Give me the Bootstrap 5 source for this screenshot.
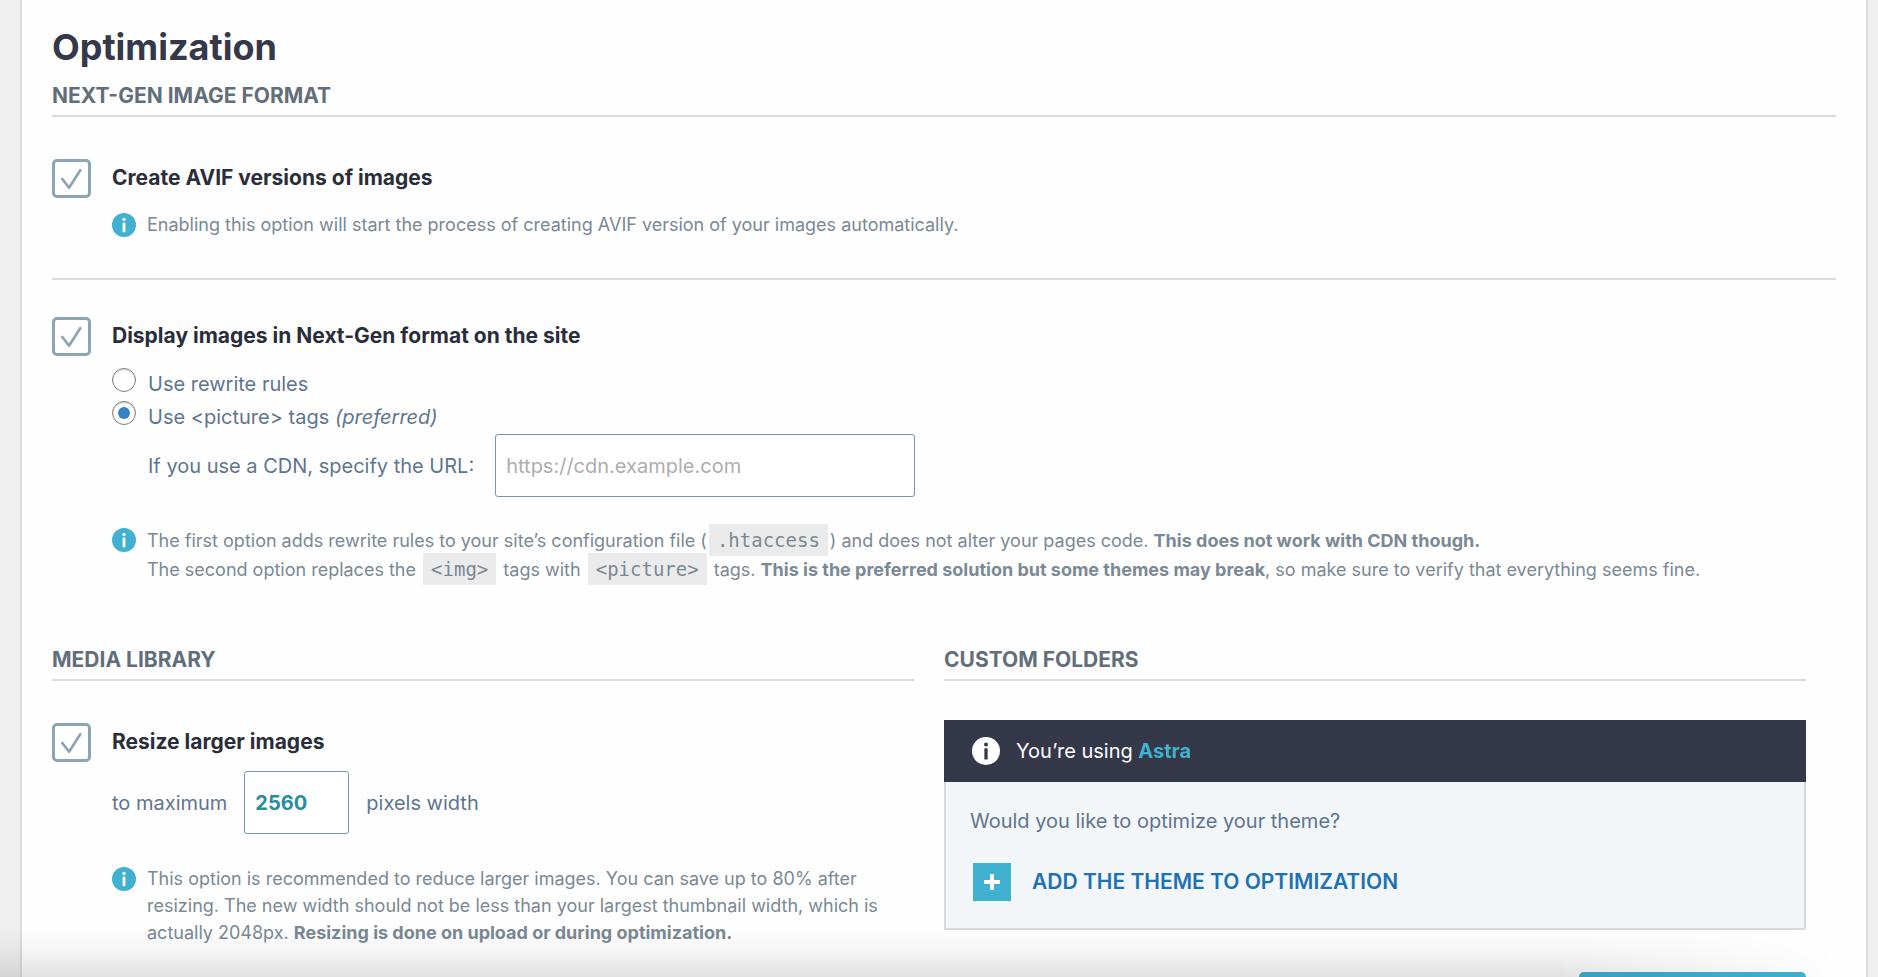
<!DOCTYPE html>
<html lang="en">
<head>
<meta charset="utf-8">
<meta name="viewport" content="width=device-width, initial-scale=1">
<title>Optimization settings</title>
<link rel="stylesheet" href="https://cdn.jsdelivr.net/npm/bootstrap@5.3.0/dist/css/bootstrap.min.css">
<style>
  body { background: #efefef; color: #5f758e; font-family: Inter, "Liberation Sans", sans-serif; font-size: 20px; line-height: 32px; }
  .page-scroll { scrollbar-width: none; padding: 0 10px 0 20px; }
  .page-scroll::-webkit-scrollbar { display: none; }
  .panel { background: #fefefe; border: solid #dcdcde; border-width: 0 2px; padding: 24px 30px 60px; }
  .panel-title { color: #343848; font-size: 36px; line-height: 46px; font-weight: 700; margin: 0 0 11px; }
  .section-title { color: #626e7a; font-size: 21px; line-height: 30px; font-weight: 700; text-transform: uppercase; border-bottom: 2px solid #d9dadc; margin: 0; padding-bottom: 4px; }
  .columns { padding: 61px 30px 0 0; }
  .columns .row { --bs-gutter-x: 30px; }
  .option { display: grid; grid-template-columns: 39px minmax(0, 1fr); column-gap: 21px; padding-top: 42px; }
  .option-first { border-bottom: 2px solid #dcdcdd; padding-bottom: 40px; }
  .option-next { padding-top: 37px; }
  .option-label { color: #2a2d3a; font-size: 21px; line-height: 38px; font-weight: 700; }
  .option .big-check { width: 39px; height: 39px; margin: 0; border: 3px solid #8aa6b2; border-radius: 5px; background-color: #fff; box-shadow: none; }
  .option .big-check:checked { background-color: #fff; border-color: #8aa6b2; background-size: 33px 33px; background-image: url("data:image/svg+xml,%3Csvg xmlns='http://www.w3.org/2000/svg' viewBox='0 0 34 34'%3E%3Cpath d='M7.5 17.5 14.5 26.5 26 8.5' fill='none' stroke='%238aa6b2' stroke-width='2.8' stroke-linecap='round' stroke-linejoin='round'/%3E%3C/svg%3E"); }
  .hint { color: #7a8994; font-size: 18px; line-height: 27px; gap: 11px; margin-top: 14px; }
  .hint svg { flex: none; margin-top: 2px; }
  .hint strong { font-weight: 700; }
  .hint-wide { line-height: 29px; margin-top: 29px; }
  .hint-resize { margin-top: 31px; }
  .hint code { font-family: "DejaVu Sans Mono", monospace; font-size: 19px; line-height: 24px; color: #7a8994; background: #ebebeb; padding: 5px 8px; margin: 0 2px; }
  .choices { margin-top: 13px; }
  .choice { gap: 12px; line-height: 33px; }
  .option .round { width: 24px; height: 24px; margin: 0; border: 1px solid #7c7f84; background-color: #fff; box-shadow: inset 0 1px 2px rgba(0,0,0,.2); }
  .option .round:checked { background-color: #fff; border-color: #7c7f84; background-size: 20px 20px; background-image: url("data:image/svg+xml,%3Csvg xmlns='http://www.w3.org/2000/svg' viewBox='0 0 20 20'%3E%3Ccircle cx='10' cy='10' r='6' fill='%233582c4'/%3E%3C/svg%3E"); }
  .cdn-row { gap: 21px; padding-left: 36px; }
  .size-row { gap: 17px; margin-top: 10px; }
  .field { height: 63px; border: 1px solid #7697a6; border-radius: 3px; font-size: 20px; padding: 0 10px; }
  .field::placeholder { color: #adadad; }
  .url-field { width: 420px; }
  .size-field { width: 105px; color: #2a8ca0; font-weight: 700; }
  .theme-box { border: 2px solid #d6d9de; background: #f2f6f9; margin-top: 39px; }
  .theme-head { background: #343849; color: #fff; margin: -2px -2px 0; padding: 15px 28px; gap: 16px; }
  .theme-head svg { flex: none; }
  .theme-head strong { color: #40b1d0; font-weight: 700; }
  .theme-body { padding: 23px 24px 27px; }
  .add-theme { color: #1e72b3; font-size: 21px; line-height: 38px; font-weight: 600; text-transform: uppercase; gap: 21px; margin: 26px 0 0 3px; }
  .add-theme .plus { background: #40b1d0; width: 38px; height: 38px; }
  .save-btn { width: 227px; height: 60px; background: #40b1d0; border: 0; border-radius: 5px; color: #fff; font-weight: 600; margin-top: 26px; }
  .bottom-shade { height: 50px; right: 40px; background: linear-gradient(rgba(0,0,0,0), rgba(0,0,0,.04) 50%, rgba(0,0,0,.11)); -webkit-mask-image: linear-gradient(to left, transparent, #000 280px); mask-image: linear-gradient(to left, transparent, #000 280px); pointer-events: none; }
</style>
</head>
<body>
<svg class="d-none" aria-hidden="true">
  <symbol id="info" viewBox="0 0 24 24">
    <circle cx="12" cy="12" r="12" fill="currentColor"/>
    <circle cx="12" cy="6.4" r="1.7"/>
    <rect x="10.6" y="9.6" width="2.8" height="9.6" rx=".4"/>
  </symbol>
</svg>
<div class="page-scroll vh-100 overflow-auto">
  <main class="panel">
    <h1 class="panel-title">Optimization</h1>

    <section>
      <h2 class="section-title">Next-Gen image format</h2>
      <div class="option option-first">
        <input class="form-check-input big-check" type="checkbox" id="avif" checked>
        <div>
          <label class="option-label" for="avif">Create AVIF versions of images</label>
          <div class="hint d-flex align-items-start">
            <svg width="24" height="24" color="#40b1d0" fill="#fff"><use href="#info"/></svg>
            <span>Enabling this option will start the process of creating AVIF version of your images automatically.</span>
          </div>
        </div>
      </div>

      <div class="option option-next">
        <input class="form-check-input big-check" type="checkbox" id="nextgen" checked>
        <div>
          <label class="option-label" for="nextgen">Display images in Next-Gen format on the site</label>
          <div class="choices">
            <div class="choice d-flex align-items-start">
              <input class="form-check-input round" type="radio" name="method" id="rewrite">
              <label for="rewrite">Use rewrite rules</label>
            </div>
            <div class="choice d-flex align-items-start">
              <input class="form-check-input round" type="radio" name="method" id="picture" checked>
              <label for="picture">Use &lt;picture&gt; tags <em>(preferred)</em></label>
            </div>
          </div>
          <div class="cdn-row d-flex align-items-center">
            <label for="cdn">If you use a CDN, specify the URL:</label>
            <input class="form-control field url-field" type="text" id="cdn" placeholder="https://cdn.example.com">
          </div>
          <div class="hint hint-wide d-flex align-items-start">
            <svg width="24" height="24" color="#40b1d0" fill="#fff"><use href="#info"/></svg>
            <span>The first option adds rewrite rules to your site’s configuration file (<code>.htaccess</code>) and does not alter your pages code. <strong>This does not work with CDN though.</strong><br>
            The second option replaces the <code>&lt;img&gt;</code> tags with <code>&lt;picture&gt;</code> tags. <strong>This is the preferred solution but some themes may break</strong>, so make sure to verify that everything seems fine.</span>
          </div>
        </div>
      </div>
    </section>

    <div class="columns">
      <div class="row">
        <section class="col-6">
          <h2 class="section-title">Media Library</h2>
          <div class="option">
            <input class="form-check-input big-check" type="checkbox" id="resize" checked>
            <div>
              <label class="option-label" for="resize">Resize larger images</label>
              <div class="size-row d-flex align-items-center">
                <label for="maxwidth">to maximum</label>
                <input class="form-control field size-field" type="text" id="maxwidth" value="2560">
                <span>pixels width</span>
              </div>
              <div class="hint hint-resize d-flex align-items-start">
                <svg width="24" height="24" color="#40b1d0" fill="#fff"><use href="#info"/></svg>
                <span>This option is recommended to reduce larger images. You can save up to 80% after resizing. The new width should not be less than your largest thumbnail width, which is actually 2048px. <strong>Resizing is done on upload or during optimization.</strong></span>
              </div>
            </div>
          </div>
        </section>
        <section class="col-6">
          <h2 class="section-title">Custom folders</h2>
          <div class="theme-box">
            <div class="theme-head d-flex align-items-center">
              <svg width="28" height="28" color="#fff" fill="#343849"><use href="#info"/></svg>
              <span>You’re using <strong>Astra</strong></span>
            </div>
            <div class="theme-body">
              <p class="mb-0">Would you like to optimize your theme?</p>
              <button type="button" class="add-theme btn p-0 border-0 d-flex align-items-center">
                <span class="plus d-flex align-items-center justify-content-center"><svg width="18" height="18" viewBox="0 0 18 18"><path d="M9 1v16M1 9h16" stroke="#fff" stroke-width="4"/></svg></span>
                Add the theme to optimization
              </button>
            </div>
          </div>
        </section>
      </div>
      <div class="d-flex justify-content-end">
        <button type="submit" class="btn save-btn" aria-label="Save changes"></button>
      </div>
    </div>
  </main>
</div>
<div class="bottom-shade position-fixed bottom-0 start-0"></div>
<script src="https://cdn.jsdelivr.net/npm/bootstrap@5.3.0/dist/js/bootstrap.bundle.min.js"></script>
</body>
</html>
